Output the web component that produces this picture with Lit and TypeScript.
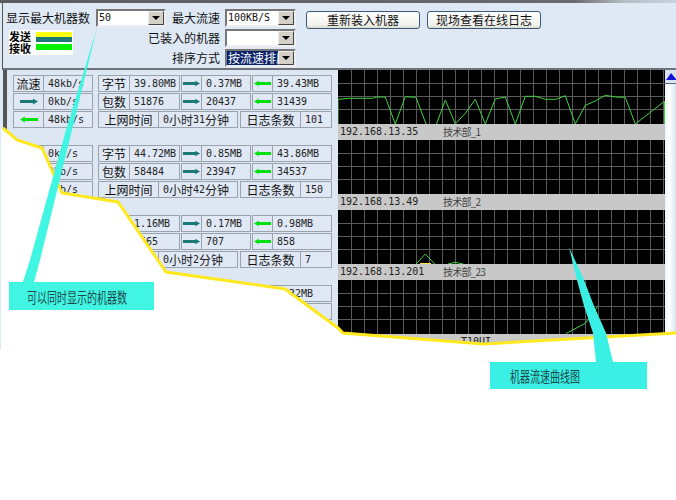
import { LitElement, html, css, svg } from "lit";
import { customElement } from "lit/decorators.js";

const CJK = /([\u4e00-\u9fff]+)/;
const mix = (s: string) =>
  s.split(CJK).map((p) => (CJK.test(p) ? html`<span class="c">${p}</span>` : p));

const rightArrow = html`<svg class="arr" width="20" height="7" viewBox="0 0 20 7"><path d="M1 2H14V0.5L19 3.5L14 6.5V5H1Z" fill="#1b7a78"/></svg>`;
const leftArrow = html`<svg class="arr" width="20" height="7" viewBox="0 0 20 7"><path d="M19 2H6V0.5L1 3.5L6 6.5V5H19Z" fill="#00e010"/></svg>`;

type Group = {
  flow: string[]; bytes: string[]; packets: string[]; time: string; logs: string; covered?: boolean;
};
const groups: Group[] = [
  { flow: ["48kb/s", "0kb/s", "48kb/s"], bytes: ["39.80MB", "0.37MB", "39.43MB"], packets: ["51876", "20437", "31439"], time: "0小时31分钟", logs: "101" },
  { flow: ["0kb/s", "0kb/s", "0kb/s"], bytes: ["44.72MB", "0.85MB", "43.86MB"], packets: ["58484", "23947", "34537"], time: "0小时42分钟", logs: "150" },
  { flow: ["0kb/s", "0kb/s", "0kb/s"], bytes: ["1.16MB", "0.17MB", "0.98MB"], packets: ["1565", "707", "858"], time: "0小时2分钟", logs: "7" },
  { flow: ["", "", ""], bytes: ["", "", "0.32MB"], packets: ["", "", ""], time: "", logs: "", covered: true },
];

type Chart = { ip: string; name: string; far?: boolean; lines: string[]; accent?: string };
const charts: Chart[] = [
  {
    ip: "192.168.13.35", name: "技术部_1",
    lines: ["0,54 0,29.3 0.7,29.3 11.3,28.3 34.7,28.3 38,27 47.3,27 57.3,54 67.3,26.7 78,27.3 88,54 97,58 107.3,30 117.3,54 127.3,43.3 137.3,29.3 147.3,54 157.3,29 167.3,27 177.3,54 187.3,26.3 197.3,26.3 207.3,29.3 218,29.3 227.3,25.7 237.3,54 247.3,35.3 257.3,31 267.3,25.3 277.3,27 287.3,27.3 297.3,54 326.5,31.3 326.5,54"],
  },
  { ip: "192.168.13.49", name: "技术部_2", lines: [] },
  {
    ip: "192.168.13.201", name: "技术部_23",
    lines: ["78,54 87.3,44 96.7,54", "110,54 117.3,52.3 125.3,54"],
    accent: "82,53.5 93,53.5",
  },
  { ip: "", name: "T10UI", far: true, lines: ["228,53.5 247.3,43.3 260,26"] },
];

const W = 327;
const H = 54;
const gridV = Array.from({ length: 25 }, (_, i) => 13.5 + i * 13);
const gridH = [13.5, 26.5, 39.5];

@customElement("app-root")
export class AppRoot extends LitElement {
  static styles = css`
    :host {
      display: block;
      position: relative;
      width: 676px;
      height: 500px;
      overflow: hidden;
      background: #fff;
      font-family: "Noto Sans CJK SC", "Liberation Sans", sans-serif;
      font-size: 12px;
      color: #111;
    }
    .window {
      height: 350px;
      background: #dfe9f5;
      display: flex;
      flex-direction: column;
    }
    .topbar {
      height: 3px;
      background: linear-gradient(90deg, #5c5c5c 0%, #6a6a6a 85%, #b5bcc4 92%, #c9d2dc 100%);
      flex: none;
    }
    .toolbar {
      height: 67px;
      flex: none;
      box-sizing: border-box;
      margin-left: 2px;
      border-left: 1px solid #555;
      border-bottom: 2px solid #6f7276;
      padding: 6px 0 0 3px;
      display: flex;
      background: #dfe9f5;
    }
    .col-a {
      width: 160px;
      flex: none;
    }
    .line {
      display: flex;
      align-items: center;
      height: 18px;
    }
    .lab {
      white-space: nowrap;
      line-height: 18px;
    }
    .lab-a {
      width: 90px;
      flex: none;
    }
    .legend {
      margin: 3px 0 0 3px;
      width: 64px;
      height: 25px;
      background: #fff;
      display: flex;
    }
    .legend-text {
      width: 27px;
      display: flex;
      flex-direction: column;
      font-weight: 700;
      font-size: 11px;
      line-height: 12px;
      color: #000;
    }
    .stripes {
      flex: 1;
      margin: 2px 1px 0 0;
      display: flex;
      flex-direction: column;
    }
    .st-y { height: 5px; background: #ffff10; }
    .st-t { height: 5px; background: #1b7a78; }
    .st-w { height: 2px; }
    .st-g { height: 6px; background: #00f000; }
    .col-b {
      width: 130px;
      flex: none;
      display: flex;
      flex-direction: column;
      gap: 2px;
    }
    .col-b .line {
      justify-content: flex-end;
      gap: 5px;
    }
    .col-c {
      display: flex;
      gap: 7px;
      margin: 2px 0 0 10px;
    }
    .btn {
      height: 18px;
      box-sizing: border-box;
      border: 1px solid #3c5a78;
      border-radius: 3px;
      background: linear-gradient(#fff, #f2f2ec 80%, #dcdcd4);
      display: flex;
      align-items: center;
      justify-content: center;
      font-size: 12px;
      line-height: 16px;
    }
    .btn1 { width: 114px; }
    .btn2 { width: 114px; }
    .sel {
      width: 71px;
      height: 18px;
      flex: none;
      box-sizing: border-box;
      border: 2px solid;
      border-color: #777 #eee #eee #777;
      background: #fff;
      display: flex;
      align-items: stretch;
    }
    .sel-a { width: 70px; }
    .sel-val {
      flex: 1;
      min-width: 0;
      overflow: hidden;
      white-space: nowrap;
      font-family: "DejaVu Sans Mono", monospace;
      font-size: 10px;
      line-height: 14px;
      padding-left: 1px;
    }
    .sel-val.on {
      background: #0a246a;
      color: #fff;
      font-family: "Noto Sans CJK SC", sans-serif;
      font-size: 12px;
    }
    .sel-btn {
      width: 16px;
      flex: none;
      box-sizing: border-box;
      background: #d4d0c8;
      border: 1px solid;
      border-color: #eee #444 #444 #eee;
      display: flex;
      align-items: center;
      justify-content: center;
    }
    .tri {
      width: 0;
      height: 0;
      border-left: 4px solid transparent;
      border-right: 4px solid transparent;
      border-top: 4px solid #000;
    }
    .body {
      flex: 1;
      min-height: 0;
      display: flex;
    }
    .panel {
      width: 335px;
      margin-left: 3px;
      flex: none;
      box-sizing: border-box;
      border-left: 4px solid #555;
      padding: 5px 0 0 6px;
      display: flex;
      flex-direction: column;
      gap: 17px;
      background: #dce7f3;
    }
    .group {
      display: flex;
      flex-direction: column;
      gap: 1px;
    }
    .row {
      display: flex;
      height: 17px;
    }
    .seg { display: flex; flex: none; }
    .s80 { width: 80px; margin-right: 5px; }
    .s82 { width: 82px; margin-right: 1px; }
    .s70 { width: 70px; margin-right: 1px; }
    .s80e { width: 80px; }
    .s140 { width: 140px; margin-right: 2px; }
    .s92 { width: 92px; }
    .cell {
      box-sizing: border-box;
      border: 1px solid #9aa2ac;
      margin-right: -1px;
      background: #dfe8f4;
      display: flex;
      align-items: center;
      justify-content: center;
      white-space: nowrap;
      overflow: hidden;
      line-height: 15px;
    }
    .w20 { width: 21px; }
    .w30 { width: 31px; }
    .w31 { width: 32px; }
    .w60 { width: 61px; }
    .val {
      flex: 1;
      min-width: 0;
      margin-right: 0;
      justify-content: flex-start;
      padding-left: 4px;
      font-family: "DejaVu Sans Mono", monospace;
      font-size: 10px;
      color: #222;
    }
    .c {
      font-family: "Noto Sans CJK SC", sans-serif;
      font-size: 12px;
    }
    .arr { display: block; }
    .charts {
      width: 327px;
      flex: none;
      display: flex;
      flex-direction: column;
    }
    .plot {
      display: block;
      width: 327px;
      height: 54px;
      background: #000;
    }
    .gl { stroke: #5a5a5a; stroke-width: 1; }
    .trace { fill: none; stroke: #3fd23f; stroke-width: 1; }
    .acc { fill: none; stroke: #ffe94a; stroke-width: 1; }
    .tag {
      height: 16px;
      background: #c8c8c8;
      display: flex;
      align-items: center;
      font-family: "DejaVu Sans Mono", monospace;
      font-size: 10px;
      color: #222;
      line-height: 16px;
    }
    .ip {
      width: 103px;
      margin-left: 2px;
      flex: none;
    }
    .name {
      font-family: "Noto Sans CJK SC", sans-serif;
      font-size: 10px;
      color: #444;
      letter-spacing: -0.8px;
    }
    .name.far {
      font-family: "DejaVu Sans Mono", monospace;
      margin-left: 18px;
      letter-spacing: 0;
      color: #222;
    }
    .scroll {
      flex: 1;
      display: flex;
      flex-direction: column;
      background: linear-gradient(90deg, #eef3fa, #fff 40%, #d9e4f2);
    }
    .scroll-up {
      height: 14px;
      flex: none;
      box-sizing: border-box;
      background: #d8e4f4;
      border-bottom: 1px solid #5c6a80;
    }
    .scroll-up svg { display: block; }
    .overlay {
      position: absolute;
      left: 0;
      top: 0;
      width: 676px;
      height: 500px;
      pointer-events: none;
    }
    .note {
      position: absolute;
      box-sizing: border-box;
      display: flex;
      align-items: center;
      color: #1d4a4c;
      font-size: 13px;
      white-space: nowrap;
    }
    .note span {
      display: block;
      transform-origin: left center;
      transform: scale(0.77, 1.1);
    }
    .note1 {
      left: 9px;
      top: 282px;
      width: 145px;
      height: 28px;
      padding-left: 18px;
      background: #40f5e2;
    }
    .note2 {
      left: 490px;
      top: 362px;
      width: 157px;
      height: 27px;
      padding-left: 20px;
      background: #3af0e4;
    }
  `;

  private select(value: string, extra = "", on = false) {
    return html`<div class="sel ${extra}">
      <div class="sel-val ${on ? "on" : ""}">${value}</div>
      <div class="sel-btn"><div class="tri"></div></div>
    </div>`;
  }

  private group(g: Group) {
    const t = (s: string) => (g.covered ? "" : s);
    const r = g.covered ? "" : rightArrow;
    const l = g.covered ? "" : leftArrow;
    return html`<div class="group">
      <div class="row">
        <div class="seg s80"><div class="cell w30">${t("流速")}</div><div class="cell val">${g.flow[0]}</div></div>
        <div class="seg s82"><div class="cell w31">${t("字节")}</div><div class="cell val">${g.bytes[0]}</div></div>
        <div class="seg s70"><div class="cell w20">${r}</div><div class="cell val">${g.bytes[1]}</div></div>
        <div class="seg s80e"><div class="cell w20">${l}</div><div class="cell val">${g.bytes[2]}</div></div>
      </div>
      <div class="row">
        <div class="seg s80"><div class="cell w30">${r}</div><div class="cell val">${g.flow[1]}</div></div>
        <div class="seg s82"><div class="cell w31">${t("包数")}</div><div class="cell val">${g.packets[0]}</div></div>
        <div class="seg s70"><div class="cell w20">${r}</div><div class="cell val">${g.packets[1]}</div></div>
        <div class="seg s80e"><div class="cell w20">${l}</div><div class="cell val">${g.packets[2]}</div></div>
      </div>
      <div class="row">
        <div class="seg s80"><div class="cell w30">${l}</div><div class="cell val">${g.flow[2]}</div></div>
        <div class="seg s140"><div class="cell w60">${t("上网时间")}</div><div class="cell val">${mix(g.time)}</div></div>
        <div class="seg s92"><div class="cell w60">${t("日志条数")}</div><div class="cell val">${g.logs}</div></div>
      </div>
    </div>`;
  }

  private chart(c: Chart) {
    return html`<svg class="plot" viewBox="0 0 ${W} ${H}" width=${W} height=${H}>
        ${gridV.map((x) => svg`<line class="gl" x1=${x} x2=${x} y1="0" y2=${H}></line>`)}
        ${gridH.map((y) => svg`<line class="gl" x1="0" x2=${W} y1=${y} y2=${y}></line>`)}
        ${c.lines.map((p) => svg`<polyline class="trace" points=${p}></polyline>`)}
        ${c.accent ? svg`<polyline class="acc" points=${c.accent}></polyline>` : ""}
      </svg>
      <div class="tag"><div class="ip">${c.ip}</div><div class="name ${c.far ? "far" : ""}">${c.name}</div></div>`;
  }

  render() {
    return html`
      <div class="window">
        <div class="topbar"></div>
        <div class="toolbar">
          <div class="col-a">
            <div class="line"><div class="lab lab-a">显示最大机器数</div>${this.select("50", "sel-a")}</div>
            <div class="legend">
              <div class="legend-text"><span>发送</span><span>接收</span></div>
              <div class="stripes">
                <div class="st-y"></div><div class="st-t"></div><div class="st-w"></div><div class="st-g"></div>
              </div>
            </div>
          </div>
          <div class="col-b">
            <div class="line"><div class="lab">最大流速</div>${this.select("100KB/S")}</div>
            <div class="line"><div class="lab">已装入的机器</div>${this.select("")}</div>
            <div class="line"><div class="lab">排序方式</div>${this.select("按流速排序", "", true)}</div>
          </div>
          <div class="col-c">
            <div class="btn btn1">重新装入机器</div>
            <div class="btn btn2">现场查看在线日志</div>
          </div>
        </div>
        <div class="body">
          <div class="panel">${groups.map((g) => this.group(g))}</div>
          <div class="charts">${charts.map((c) => this.chart(c))}</div>
          <div class="scroll">
            <div class="scroll-up">
              <svg width="11" height="13" viewBox="0 0 11 13"><path d="M6 3L1 10H11V9Z" fill="#1414d8"/></svg>
            </div>
          </div>
        </div>
      </div>
      <svg class="overlay" viewBox="0 0 676 500" width="676" height="500">
        <polygon fill="#fff" points="1,128 17,140 42,148 62,193 118,202 166,272 285,289 338,328 343,333 483,344 676,333 676,500 0,500 0,350 1,350"></polygon>
        <polyline fill="none" stroke="#ffe81e" stroke-width="3" points="3,128 17,140 42,148 62,193 118,202 166,272 285,289 338,328 343,333 483,344 676,333"></polyline>
        <polygon fill="#40f5e2" points="97,28 72,130 40,260 34,282 23,282 30,260 66,130"></polygon>
        <polygon fill="#3af0e4" points="569,247 584,280 594,306 606,333 613,362 596,362 593,333 584,306 577,280"></polygon>
      </svg>
      <div class="note note1"><span>可以同时显示的机器数</span></div>
      <div class="note note2"><span>机器流速曲线图</span></div>
    `;
  }
}
